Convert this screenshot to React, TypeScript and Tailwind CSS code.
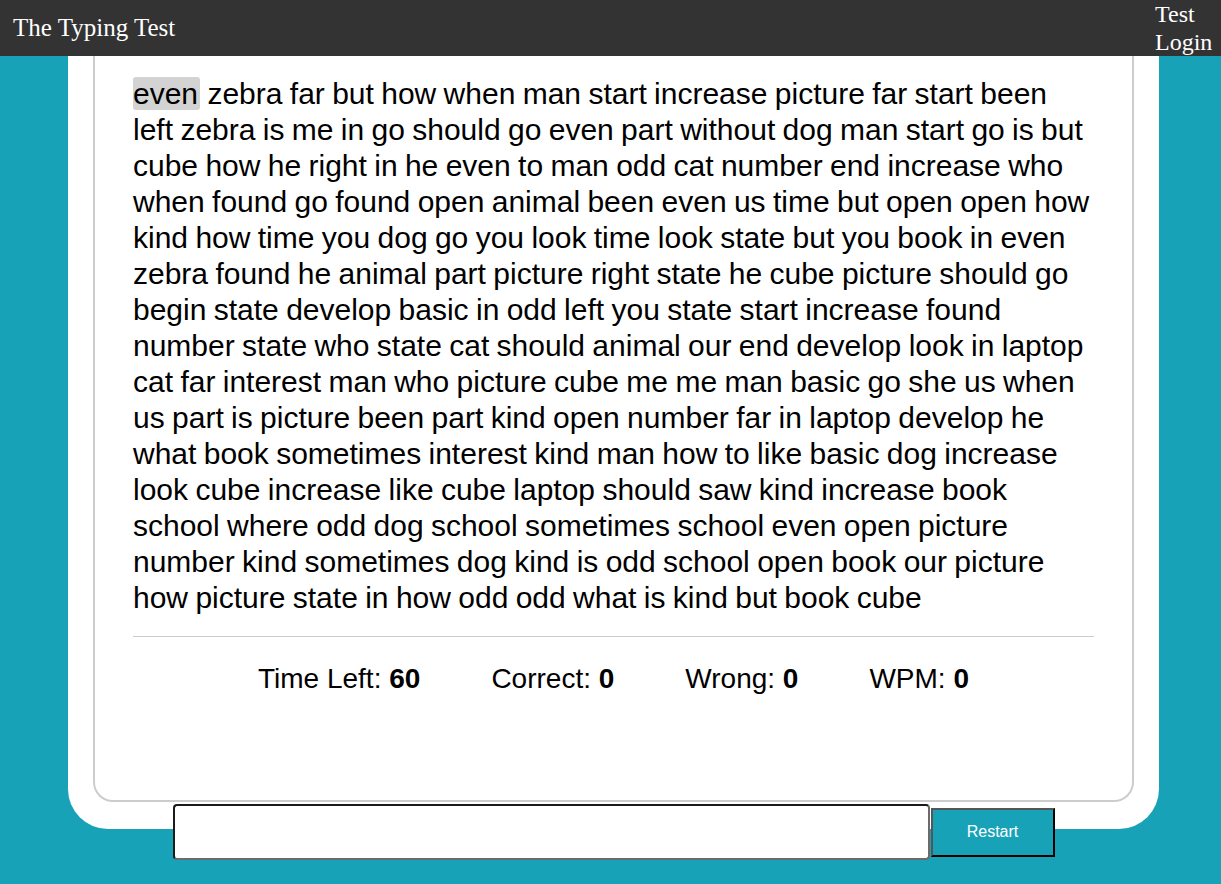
import React, { useState } from "react";

const WORDS =
  "even zebra far but how when man start increase picture far start been left zebra is me in go should go even part without dog man start go is but cube how he right in he even to man odd cat number end increase who when found go found open animal been even us time but open open how kind how time you dog go you look time look state but you book in even zebra found he animal part picture right state he cube picture should go begin state develop basic in odd left you state start increase found number state who state cat should animal our end develop look in laptop cat far interest man who picture cube me me man basic go she us when us part is picture been part kind open number far in laptop develop he what book sometimes interest kind man how to like basic dog increase look cube increase like cube laptop should saw kind increase book school where odd dog school sometimes school even open picture number kind sometimes dog kind is odd school open book our picture how picture state in how odd odd what is kind but book cube".split(
    " "
  );

function Stat({ label, value }: { label: string; value: number }) {
  return (
    <div>
      {label}: <b>{value}</b>
    </div>
  );
}

export default function App() {
  const [typed, setTyped] = useState<string>("");
  const current = 0;

  return (
    <div className="min-h-[884px] bg-[#18a2b8] font-['Liberation_Sans',Arial,sans-serif]">
      <header className="flex justify-between bg-[#333333] text-white font-['Liberation_Serif','Times_New_Roman',serif] text-[24px] leading-[28px]">
        <div className="pl-[13px] self-center text-[25px]">The Typing Test</div>
        <nav className="flex flex-col pr-[7px] w-[66px]">
          <a>Test</a>
          <a>Login</a>
        </nav>
      </header>

      <main className="ml-[68px] w-[1091px]">
        <div className="bg-white rounded-b-[40px] px-[25px] pb-[27px]">
          <div className="border-2 border-t-0 border-[#cccccc] rounded-b-[20px] px-[38px] pt-[20px] h-[746px]">
            <p className="text-[30px] leading-[36px] text-black [word-spacing:-1px]">
              {WORDS.map((w, i) => (
                <React.Fragment key={i}>
                  <span className={i === current ? "bg-[#d3d3d3] rounded-[3px] pr-[2px]" : ""}>{w}</span>
                  {i < WORDS.length - 1 ? " " : ""}
                </React.Fragment>
              ))}
            </p>
            <hr className="mt-[20px] border-t border-[#cccccc]" />
            <div className="flex justify-center gap-[71px] text-[28px] leading-[32px] text-black pt-[26px]">
              <Stat label="Time Left" value={60} />
              <Stat label="Correct" value={0} />
              <Stat label="Wrong" value={0} />
              <Stat label="WPM" value={0} />
            </div>
          </div>
        </div>
        <div className="flex justify-center items-center -mt-[25px]">
          <input
            value={typed}
            onChange={(e) => setTyped(e.target.value)}
            className="w-[757px] h-[56px] bg-white rounded-[4px] border-2 border-t-[#1a1a1a] border-l-[#1a1a1a] border-b-[#6b6b6b] border-r-[#6b6b6b] outline-none px-2 text-[20px]"
          />
          <button className="w-[124px] h-[49px] ml-[1px] bg-[#18a2b8] text-white text-[16px] border-2 border-t-[#555555] border-l-[#555555] border-b-black border-r-black">
            Restart
          </button>
        </div>
      </main>
    </div>
  );
}
